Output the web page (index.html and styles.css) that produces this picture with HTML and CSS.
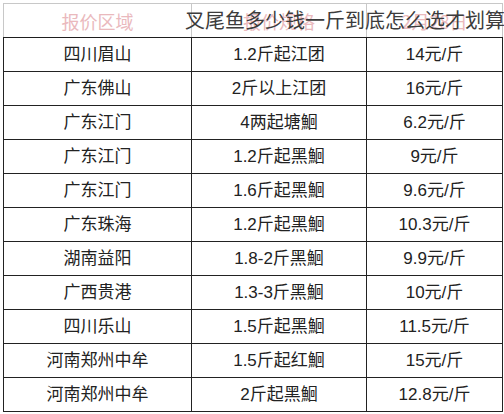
FILE: index.html
```html
<!DOCTYPE html>
<html lang="zh">
<head>
<meta charset="utf-8">
<link rel="stylesheet" href="styles.css">
</head>
<body>
<div class="wrap">
  <table class="price">
    <colgroup><col class="c1"><col class="c2"><col class="c3"></colgroup>
    <thead>
      <tr><th>报价区域</th><th>报价规格</th><th>2月28日</th></tr>
    </thead>
    <tbody>
      <tr><td>四川眉山</td><td>1.2斤起江团</td><td>14元/斤</td></tr>
      <tr><td>广东佛山</td><td>2斤以上江团</td><td>16元/斤</td></tr>
      <tr><td>广东江门</td><td>4两起塘鮰</td><td>6.2元/斤</td></tr>
      <tr><td>广东江门</td><td>1.2斤起黑鮰</td><td>9元/斤</td></tr>
      <tr><td>广东江门</td><td>1.6斤起黑鮰</td><td>9.6元/斤</td></tr>
      <tr><td>广东珠海</td><td>1.2斤起黑鮰</td><td>10.3元/斤</td></tr>
      <tr><td>湖南益阳</td><td>1.8-2斤黑鮰</td><td>9.9元/斤</td></tr>
      <tr><td>广西贵港</td><td>1.3-3斤黑鮰</td><td>10元/斤</td></tr>
      <tr><td>四川乐山</td><td>1.5斤起黑鮰</td><td>11.5元/斤</td></tr>
      <tr><td>河南郑州中牟</td><td>1.5斤起红鮰</td><td>15元/斤</td></tr>
      <tr><td>河南郑州中牟</td><td>2斤起黑鮰</td><td>12.8元/斤</td></tr>
    </tbody>
  </table>
  <div class="title">叉尾鱼多少钱一斤到底怎么选才划算</div>
</div>
</body>
</html>
```

FILE: styles.css
```css
html, body {
  margin: 0;
  padding: 0;
  background: #ffffff;
}
.wrap {
  position: relative;
  width: 504px;
  height: 414px;
  overflow: hidden;
  padding: 3px 0 0 3px;
  box-sizing: border-box;
}
.price {
  border-collapse: collapse;
  table-layout: fixed;
  width: 499px;
  font-family: "Liberation Sans", "Noto Sans CJK SC", sans-serif;
  font-size: 17px;
  color: #222222;
}
.c1 { width: 188px; }
.c2 { width: 175px; }
.c3 { width: 136px; }
.price th,
.price td {
  height: 33px;
  padding: 0;
  text-align: center;
  vertical-align: middle;
  line-height: 20px;
}
.price th {
  font-weight: normal;
  font-size: 18px;
  color: #eab9bd;
  border: 1px solid #c8c8c8;
  border-bottom: 1px solid #1e1e1e;
  font-family: "Noto Sans CJK SC", sans-serif;
}
.price td {
  border: 1px solid #222222;
}
.title {
  position: absolute;
  left: 185px;
  top: 7px;
  font-family: "Noto Sans CJK SC", sans-serif;
  font-size: 20px;
  line-height: 26px;
  color: #3c3c3c;
  white-space: nowrap;
}
```
